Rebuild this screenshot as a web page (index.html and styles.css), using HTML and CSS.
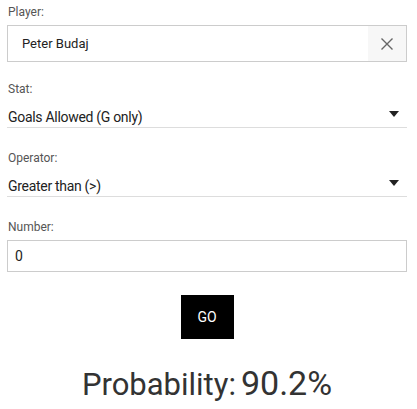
FILE: index.html
```html
<!DOCTYPE html>
<html>
<head>
<meta charset="utf-8">
<link rel="stylesheet" href="styles.css">
</head>
<body>
<div class="form">
  <div class="field">
    <label class="label">Player:</label>
    <div class="combo">
      <span class="combo-value">Peter Budaj</span>
      <span class="clear">
        <svg width="14" height="14" viewBox="0 0 14 14"><path d="M1.5 1.5 L12.5 12.5 M12.5 1.5 L1.5 12.5" stroke="#666" stroke-width="1.4" fill="none"/></svg>
      </span>
    </div>
  </div>
  <div class="field">
    <label class="label">Stat:</label>
    <div class="select">
      <span class="select-value">Goals Allowed (G only)</span>
      <svg class="caret" width="10" height="6" viewBox="0 0 10 6"><path d="M0 0 H10 L5 6 Z" fill="#222"/></svg>
    </div>
  </div>
  <div class="field">
    <label class="label">Operator:</label>
    <div class="select">
      <span class="select-value">Greater than (&gt;)</span>
      <svg class="caret" width="10" height="6" viewBox="0 0 10 6"><path d="M0 0 H10 L5 6 Z" fill="#222"/></svg>
    </div>
  </div>
  <div class="field">
    <label class="label">Number:</label>
    <div class="input">0</div>
  </div>
  <div class="actions">
    <button class="go">GO</button>
  </div>
  <div class="result">
    <span class="result-label">Probability:</span>
    <span class="result-value">90.2%</span>
  </div>
</div>
</body>
</html>
```
FILE: styles.css
```css
html, body {
  margin: 0;
  padding: 0;
  background: #fff;
}
body {
  font-family: "Roboto", "Liberation Sans", sans-serif;
  color: #222;
}
.form {
  padding: 0 10px 0 7px;
}
.field {
  display: flex;
  flex-direction: column;
}
.label {
  font-size: 12px;
  color: #555;
  height: 18px;
  line-height: 18px;
  margin-top: 3px;
  margin-bottom: 4px;
  padding-left: 1px;
}
.combo {
  display: flex;
  align-items: stretch;
  height: 35px;
  border: 1px solid #ccc;
  margin-bottom: 15px;
}
.combo-value {
  flex: 1;
  display: flex;
  align-items: center;
  padding-left: 14px;
  font-size: 13px;
  color: #222;
}
.clear {
  width: 38px;
  display: flex;
  align-items: center;
  justify-content: center;
  background: #f7f7f7;
}
.select {
  display: flex;
  align-items: flex-end;
  justify-content: space-between;
  height: 26px;
  padding-bottom: 2px;
  box-sizing: border-box;
  border-bottom: 1px solid #ddd;
  margin-bottom: 18px;
}
.select-value {
  font-size: 14px;
  letter-spacing: -0.3px;
  color: #222;
  padding-left: 1px;
}
.caret {
  align-self: center;
  margin-right: 8px;
}
.input {
  height: 30px;
  border: 1px solid #ccc;
  display: flex;
  align-items: center;
  padding-left: 7px;
  font-size: 14px;
  color: #222;
}
.actions {
  display: flex;
  justify-content: center;
  margin-top: 23px;
}
.go {
  width: 53px;
  height: 44px;
  background: #000;
  color: #fff;
  border: none;
  font-family: "Roboto", sans-serif;
  font-size: 14px;
  padding: 0;
}
.result {
  display: flex;
  justify-content: center;
  align-items: baseline;
  gap: 5px;
  margin-top: 24px;
  color: #333;
}
.result-label {
  font-size: 31px;
}
.result-value {
  font-size: 34px;
}
```
